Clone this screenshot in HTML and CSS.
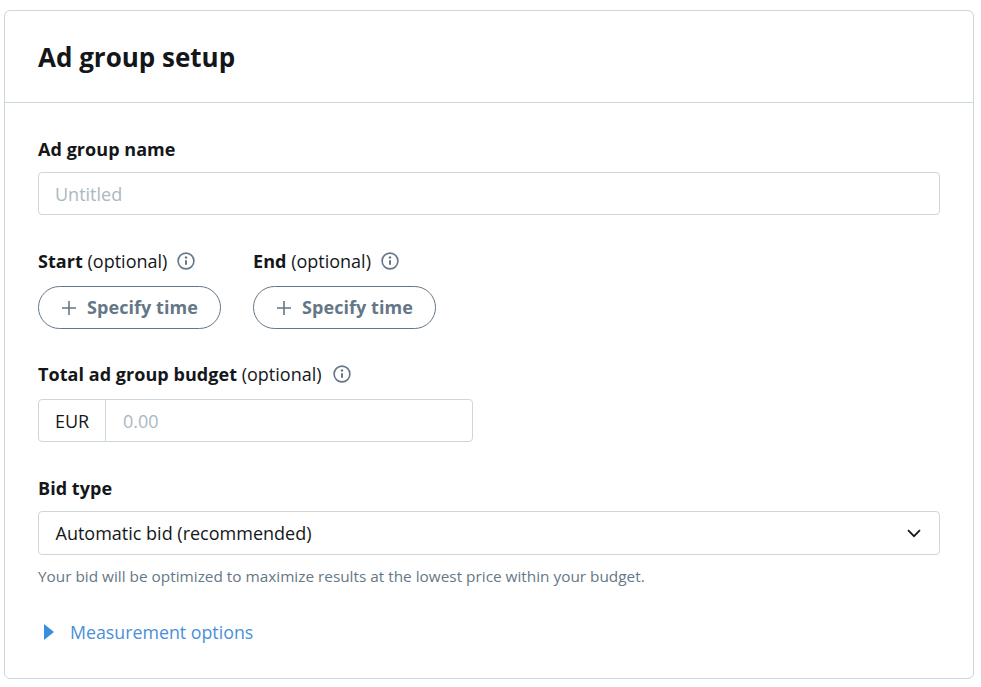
FILE: index.html
```html
<!DOCTYPE html>
<html lang="en">
<head>
<meta charset="utf-8">
<title>Ad group setup</title>
<link rel="stylesheet" href="styles.css">
</head>
<body>
<section class="card">
  <header class="card-head"><h1>Ad group setup</h1></header>
  <div class="card-body">
    <div class="field name-field">
      <label class="label"><span><b>Ad group name</b></span></label>
      <div class="input"><span class="ph">Untitled</span></div>
    </div>
    <div class="times">
      <div class="time">
        <div class="label"><span><b>Start</b> (optional)</span>
          <svg class="info" viewBox="0 0 18 18"><circle cx="9" cy="9" r="7.9"/><path d="M9 8.2v4.6"/><circle class="dot" cx="9" cy="5.5" r="1.2"/></svg>
        </div>
        <button class="pill"><svg viewBox="0 0 16 16"><path d="M8 1v14M1 8h14"/></svg><span class="pill-text">Specify time</span></button>
      </div>
      <div class="time">
        <div class="label"><span><b>End</b> (optional)</span>
          <svg class="info" viewBox="0 0 18 18"><circle cx="9" cy="9" r="7.9"/><path d="M9 8.2v4.6"/><circle class="dot" cx="9" cy="5.5" r="1.2"/></svg>
        </div>
        <button class="pill"><svg viewBox="0 0 16 16"><path d="M8 1v14M1 8h14"/></svg><span class="pill-text">Specify time</span></button>
      </div>
    </div>
    <div class="field budget-field">
      <div class="label"><span><b>Total ad group budget</b> (optional)</span>
        <svg class="info" viewBox="0 0 18 18"><circle cx="9" cy="9" r="7.9"/><path d="M9 8.2v4.6"/><circle class="dot" cx="9" cy="5.5" r="1.2"/></svg>
      </div>
      <div class="budget"><span class="cur">EUR</span><span class="ph amount">0.00</span></div>
    </div>
    <div class="field bid-field">
      <div class="label"><span><b>Bid type</b></span></div>
      <div class="input select"><span>Automatic bid (recommended)</span>
        <svg class="chev" viewBox="0 0 14 9"><path d="M1 1.2l6 6 6-6"/></svg>
      </div>
      <p class="help">Your bid will be optimized to maximize results at the lowest price within your budget.</p>
    </div>
    <a class="measure"><svg viewBox="0 0 10 16"><path d="M0 0l10 8-10 8z"/></svg>Measurement options</a>
  </div>
</section>
</body>
</html>
```
FILE: styles.css
```css
* { box-sizing: border-box; }
html, body { margin: 0; padding: 0; }
body {
  background: #fff;
  color: #14171a;
  font-family: "Open Sans", "Noto Sans", sans-serif;
  padding: 10px 7px 8px 4px;
  height: 687px;
  overflow: hidden;
}
.card {
  width: 970px;
  height: 669px;
  border: 1px solid #ccd6dd;
  border-radius: 6px;
}
.card-head {
  height: 92px;
  border-bottom: 1px solid #ccd6dd;
  padding: 0 33px;
  display: flex;
  align-items: center;
}
h1 { margin: 0; font-size: 26px; font-weight: 700; line-height: 32px; }
.card-body { padding: 34px 33px 0; }
.label { font-size: 18px; line-height: 24px; color: #14171a; display: flex; align-items: center; gap: 10px; height: 24px; white-space: nowrap; }
.label b { font-weight: 700; letter-spacing: .05px; }
.input {
  margin-top: 11px;
  height: 43px;
  border: 1px solid #ccd6dd;
  border-radius: 4px;
  padding: 0 16px;
  display: flex;
  align-items: center;
  font-size: 18px;
}
.ph { color: #aab8c2; }
.times { display: flex; gap: 32px; margin-top: 34px; }
.time { width: 183px; }
.info { width: 18px; height: 18px; fill: none; stroke: #657786; stroke-width: 1.6; }
.info path { stroke-width: 2; }
.info .dot { fill: #657786; stroke: none; }
.pill {
  margin-top: 13px;
  width: 183px;
  height: 43px;
  border: 1px solid #657786;
  border-radius: 22px;
  background: #fff;
  color: #657786;
  font: 700 18px "Open Sans", sans-serif;
  display: flex;
  align-items: center;
  justify-content: center;
  gap: 10px;
  padding: 0;
}
.pill-text { padding-bottom: 2px; letter-spacing: .05px; }
.pill svg { width: 16px; height: 16px; fill: none; stroke: #657786; stroke-width: 1.6; }
.budget-field { margin-top: 33px; }
.budget-field .label { gap: 11px; }
.budget {
  margin-top: 13px;
  width: 435px;
  height: 43px;
  border: 1px solid #ccd6dd;
  border-radius: 4px;
  display: flex;
  align-items: center;
  font-size: 18px;
}
.cur { width: 67px; height: 100%; border-right: 1px solid #ccd6dd; display: flex; align-items: center; justify-content: center; }
.amount { padding-left: 17px; }
.bid-field { margin-top: 34px; }
.bid-field .input { margin-top: 11px; height: 44px; justify-content: space-between; padding-left: 16.5px; }
.chev { width: 14px; height: 9px; fill: none; stroke: #14171a; stroke-width: 1.7; margin-right: 2px; }
.help { margin: 11px 0 0; font-size: 15.35px; line-height: 20px; color: #657786; }
.measure { margin-top: 34px; display: flex; align-items: center; gap: 16px; font-size: 17.8px; line-height: 24px; color: #4a90d9; padding-left: 6px; }
.measure svg { width: 10px; height: 16px; fill: #3b8ede; }
```
